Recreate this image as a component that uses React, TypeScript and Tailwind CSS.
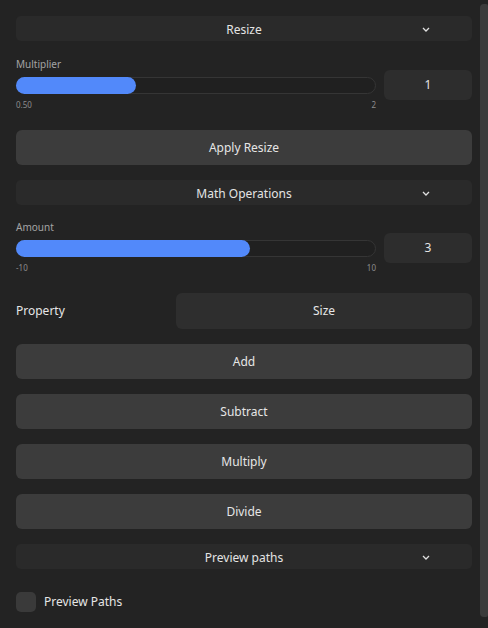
import React, { useState } from 'react';

const font = { fontFamily: '"Noto Sans", "Open Sans", sans-serif' };

function Section({ title }: { title: string }) {
  return (
    <div className="relative flex h-[25px] items-center justify-center rounded-[5px] bg-[#2a2a2a] pt-[2px] text-[12px] text-[#e4e4e4]">
      <span>{title}</span>
      <svg
        className="absolute right-[42px] top-[11px]"
        width="8"
        height="5"
        viewBox="0 0 8 5"
        fill="none"
      >
        <path d="M1 1l3 3 3-3" stroke="#e0e0e0" strokeWidth="1.3" />
      </svg>
    </div>
  );
}

function SliderRow({
  label,
  min,
  max,
  value,
}: {
  label: string;
  min: number;
  max: number;
  value: number;
}) {
  const pct = ((value - min) / (max - min)) * 100;
  return (
    <div className="flex flex-col">
      <div className="h-[10px] text-[10px] leading-[10px] text-[#a3a3a3]">{label}</div>
      <div className="mt-[1px] flex items-center gap-2">
        <div className="h-[17px] flex-1 rounded-full border border-[#353535] bg-[#202020]">
          <div
            className="-m-px h-[17px] rounded-full bg-[#5289fa]"
            style={{ width: `calc(${pct}% + 1px)` }}
          />
        </div>
        <div className="flex h-[30px] w-[88px] items-center justify-center rounded-[6px] bg-[#2d2d2d] text-[12px] text-[#e4e4e4]">
          {value}
        </div>
      </div>
      <div className="flex justify-between pr-[96px] text-[8px] leading-[10px] text-[#8c8c8c]">
        <span>{min === 0.5 ? '0.50' : min}</span>
        <span>{max}</span>
      </div>
    </div>
  );
}

function Button({ children }: { children: React.ReactNode }) {
  return (
    <div className="flex h-[35px] items-center justify-center rounded-[6px] bg-[#3c3c3c] pt-px text-[12px] text-[#e6e6e6]">
      {children}
    </div>
  );
}

export default function App() {
  const [preview, setPreview] = useState(false);

  return (
    <div className="flex h-[628px] w-[488px] overflow-hidden bg-[#232323]" style={font}>
      <div className="flex flex-1 flex-col pl-4 pr-2 pt-4">
        <Section title="Resize" />
        <div className="mt-[18px]">
          <SliderRow label="Multiplier" min={0.5} max={2} value={1} />
        </div>
        <div className="mt-[20px]">
          <Button>Apply Resize</Button>
        </div>
        <div className="mt-[15px]">
          <Section title="Math Operations" />
        </div>
        <div className="mt-[17px]">
          <SliderRow label="Amount" min={-10} max={10} value={3} />
        </div>
        <div className="mt-[20px] flex items-center">
          <span className="w-[160px] text-[12px] text-[#e6e6e6]">Property</span>
          <div className="flex h-[36px] flex-1 items-center justify-center rounded-[6px] bg-[#2e2e2e] text-[12px] text-[#e6e6e6]">
            Size
          </div>
        </div>
        <div className="mt-[15px] flex flex-col gap-[15px]">
          <Button>Add</Button>
          <Button>Subtract</Button>
          <Button>Multiply</Button>
          <Button>Divide</Button>
          <Section title="Preview paths" />
        </div>
        <label className="mt-[23px] flex cursor-pointer items-center gap-2 text-[12px] text-[#e6e6e6]">
          <span
            onClick={() => setPreview(!preview)}
            className="h-[20px] w-[20px] rounded-[5px] bg-[#3a3a3a]"
          />
          Preview Paths
        </label>
      </div>
      <div className="mt-1 h-[613px] w-2 rounded-l-[4px] rounded-r-[2px] bg-[#3b3b3b]" />
    </div>
  );
}
